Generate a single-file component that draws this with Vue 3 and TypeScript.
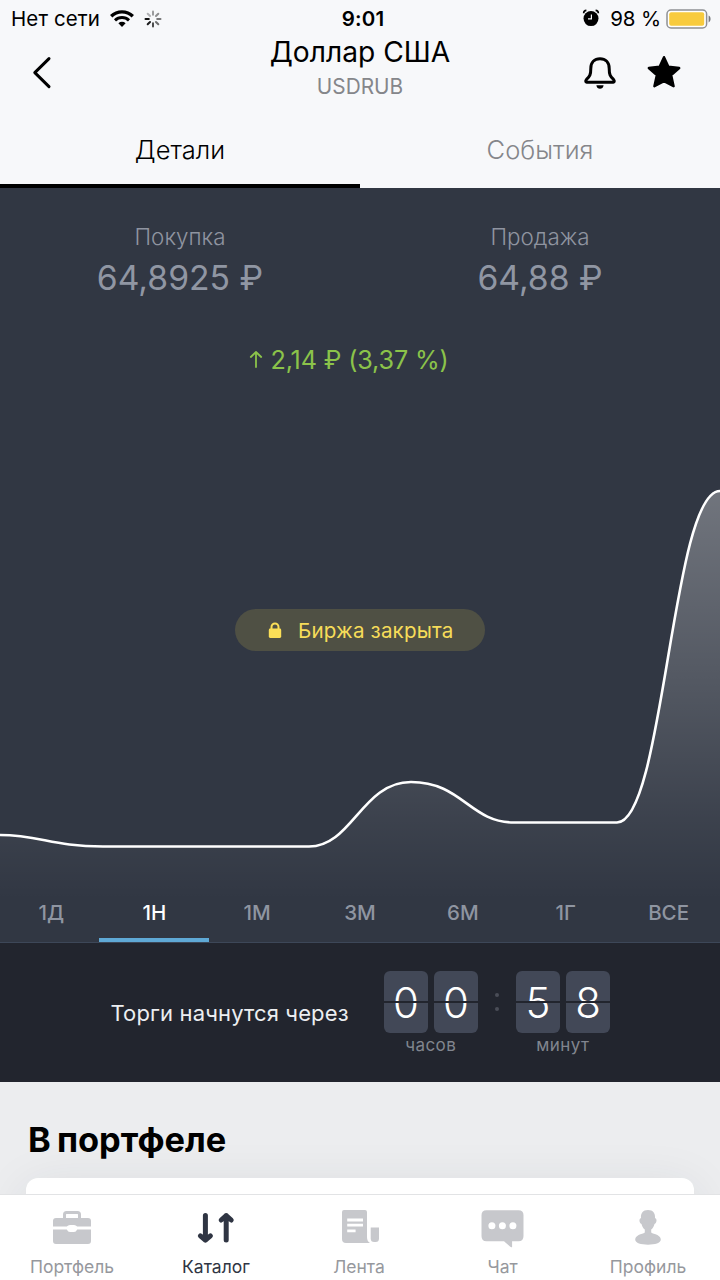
<script setup lang="ts">
import { ref } from 'vue'

const ranges: string[] = ['1Д', '1Н', '1М', '3М', '6М', '1Г', 'ВСЕ']
const activeRange = ref('1Н')

const tabs: string[] = ['Детали', 'События']
const activeTab = ref('Детали')

interface TimerGroup {
  digits: string[]
  label: string
}
const timer: TimerGroup[] = [
  { digits: ['0', '0'], label: 'часов' },
  { digits: ['5', '8'], label: 'минут' },
]

const spokes: { angle: number; opacity: number }[] = [
  { angle: 0, opacity: 0.4 },
  { angle: 45, opacity: 0.45 },
  { angle: 90, opacity: 0.55 },
  { angle: 135, opacity: 0.6 },
  { angle: 180, opacity: 0.75 },
  { angle: 225, opacity: 0.95 },
  { angle: 270, opacity: 1 },
  { angle: 315, opacity: 0.3 },
]

const linePath =
  'M0 647 C40 647 52 658.5 103 658.5 L309 658.5 C352 658.5 362 594 411 594 C462 594 470 634.5 514 634.5 L617 634.5 C664 634.5 672 303 720 303'
const areaPath = linePath + ' L720 755 L0 755 Z'
</script>

<template>
  <div class="screen">
    <header class="header">
      <div class="status">
        <div class="status-left">
          <span class="carrier">Нет сети</span>
          <svg class="wifi" width="26" height="20" viewBox="0 0 26 20" fill="none" stroke="#000">
            <path d="M2.2 7.2A15.6 15.6 0 0 1 23.8 7.2" stroke-width="3.4" />
            <path d="M6 11.4A10.2 10.2 0 0 1 20 11.4" stroke-width="3" />
            <path d="M13 18L9.4 14.3A5.2 5.2 0 0 1 16.6 14.3Z" fill="#000" stroke="none" />
          </svg>
          <svg class="spinner" width="18" height="18" viewBox="-9 -9 18 18" stroke="#111" stroke-width="2" stroke-linecap="round">
            <line
              v-for="s in spokes"
              :key="s.angle"
              x1="0"
              y1="-4.2"
              x2="0"
              y2="-7.5"
              :transform="`rotate(${s.angle})`"
              :opacity="s.opacity"
            />
          </svg>
        </div>
        <span class="clock">9:01</span>
        <div class="status-right">
          <svg class="alarm" width="18" height="18" viewBox="0 0 18 18">
            <circle cx="9" cy="9.6" r="7.5" />
            <path d="M1.6 4.2A3 3 0 0 1 4.4 1.4M16.4 4.2A3 3 0 0 0 13.6 1.4" fill="none" stroke="#000" stroke-width="1.6" />
            <path d="M9.4 5.4V9.8H6" fill="none" stroke="#f7f8fa" stroke-width="1.2" />
          </svg>
          <span class="percent">98 %</span>
          <svg class="battery" width="46" height="20" viewBox="0 0 46 20">
            <rect x="1" y="1" width="39.6" height="18" rx="4" fill="#fff" stroke="#8f9094" stroke-width="1.5" />
            <rect x="3.2" y="3.2" width="35" height="13.6" rx="2" fill="#f8cb3e" />
            <path d="M42.6 6.6C45.2 7.6 45.2 12.4 42.6 13.4Z" fill="#77787c" />
          </svg>
        </div>
      </div>
      <div class="nav">
        <svg class="back" width="20" height="34" viewBox="0 0 20 34" fill="none" stroke="#000" stroke-width="3" stroke-linecap="round" stroke-linejoin="round">
          <path d="M17 2.6L2.8 16.6L17 30.6" />
        </svg>
        <div class="titles">
          <h1 class="title">Доллар США</h1>
          <span class="ticker">USDRUB</span>
        </div>
        <div class="actions">
          <svg width="34" height="36" viewBox="0 -1 34 36">
            <path
              d="M17 2.7C11.5 2.7 7.8 6.5 7.8 12.4C7.8 18.8 6.8 20.4 3.5 23.4C2.4 24.6 2.5 26.2 3.6 26.2H30.4C31.5 26.2 31.6 24.6 30.5 23.4C27.2 20.4 26.2 18.8 26.2 12.4C26.2 6.5 22.5 2.7 17 2.7Z"
              fill="none"
              stroke="#000"
              stroke-width="3"
              stroke-linejoin="round"
            />
            <path d="M13.4 29.2H20.6C20.3 34 13.7 34 13.4 29.2Z" />
          </svg>
          <svg width="36" height="34" viewBox="0 0 36 34" stroke="#000" stroke-width="2.4" stroke-linejoin="round">
            <path d="M18 2.2L22.4 11.8L33.2 13L25.2 20.2L27.6 31.2L18 26.2L8.4 31.2L10.8 20.2L2.8 13L13.6 11.8Z" />
          </svg>
        </div>
      </div>
      <nav class="tabs">
        <button
          v-for="tab in tabs"
          :key="tab"
          class="tab"
          :class="{ active: tab === activeTab }"
          @click="activeTab = tab"
        >
          {{ tab }}
        </button>
      </nav>
    </header>

    <section class="chart-panel">
      <svg class="chart" width="720" height="755" viewBox="0 0 720 755">
        <defs>
          <linearGradient id="area" gradientUnits="userSpaceOnUse" x1="0" y1="303" x2="0" y2="712">
            <stop offset="0" stop-color="#fff" stop-opacity="0.31" />
            <stop offset="0.5" stop-color="#fff" stop-opacity="0.155" />
            <stop offset="0.8" stop-color="#fff" stop-opacity="0.055" />
            <stop offset="1" stop-color="#fff" stop-opacity="0" />
          </linearGradient>
        </defs>
        <path :d="areaPath" fill="url(#area)" />
        <path :d="linePath" fill="none" stroke="#fff" stroke-width="2.6" />
      </svg>
      <div class="panel-content">
        <div class="quotes">
          <div class="quote">
            <span class="quote-label">Покупка</span>
            <span class="quote-price">64,8925 ₽</span>
          </div>
          <div class="quote">
            <span class="quote-label">Продажа</span>
            <span class="quote-price">64,88 ₽</span>
          </div>
        </div>
        <div class="change">
          <svg width="14" height="20" viewBox="0 0 14 20" fill="none" stroke="#8bc34a" stroke-width="1.8" stroke-linecap="round" stroke-linejoin="round">
            <path d="M7 17V2M1.8 7L7 2L12.2 7" />
          </svg>
          <span>2,14 ₽ (3,37 %)</span>
        </div>
        <div class="closed">
          <svg width="14" height="17" viewBox="0 0 14 17">
            <rect x="0.8" y="6.6" width="12.4" height="9.4" rx="1.4" fill="#fbdf57" />
            <path d="M3.5 8V5A3.5 3.5 0 0 1 10.5 5V8" fill="none" stroke="#fbdf57" stroke-width="2" />
          </svg>
          <span>Биржа закрыта</span>
        </div>
        <div class="ranges">
          <button
            v-for="r in ranges"
            :key="r"
            class="range"
            :class="{ active: r === activeRange }"
            @click="activeRange = r"
          >
            {{ r }}
          </button>
        </div>
      </div>
    </section>

    <section class="countdown">
      <span class="countdown-text">Торги начнутся через</span>
      <div class="timer">
        <template v-for="(group, i) in timer" :key="group.label">
          <div v-if="i > 0" class="colon"><i></i><i></i></div>
          <div class="group">
            <div class="digits">
              <span v-for="(d, j) in group.digits" :key="j" class="digit">{{ d }}</span>
            </div>
            <span class="unit">{{ group.label }}</span>
          </div>
        </template>
      </div>
    </section>

    <section class="portfolio">
      <h2 class="portfolio-title">В портфеле</h2>
      <div class="card"></div>
    </section>

    <footer class="tabbar">
      <div class="item">
        <svg width="44" height="46" viewBox="0 0 44 46" fill="#c7c8cc">
          <path d="M14.5 14V8.5Q14.5 6.5 16.5 6.5H27.5Q29.5 6.5 29.5 8.5V14" fill="none" stroke="#c7c8cc" stroke-width="3" />
          <path d="M6 12H38Q41 12 41 15V20.6H27.2Q26 19 24 19H20Q18 19 16.8 20.6H3V15Q3 12 6 12Z" />
          <path d="M3 23.4H16.8Q18 26 20 26H24Q26 26 27.2 23.4H41V35Q41 38 38 38H6Q3 38 3 35Z" />
        </svg>
        <span>Портфель</span>
      </div>
      <div class="item current">
        <svg width="44" height="46" viewBox="0 0 44 46" fill="none" stroke="#2f3543" stroke-width="5" stroke-linecap="round" stroke-linejoin="round">
          <path d="M11.4 9.5V34M6.4 29.8L11.4 34.2L16.4 29.8" />
          <path d="M32.2 34V9.6M27.2 14L32.2 9.5L37.2 14" />
        </svg>
        <span>Каталог</span>
      </div>
      <div class="item news">
        <svg width="44" height="46" viewBox="0 0 44 46" fill="#c7c8cc">
          <path d="M7 4H28Q30 4 30 6V31Q30 35.5 33 37H9Q5 37 5 33V6Q5 4 7 4Z" />
          <path d="M33.7 21.5H42V32.5Q42 36 38.5 36H37.2Q33.7 36 33.7 32.5Z" />
          <path d="M10.2 14H26M10.2 19.2H26M10.2 24.8H18.6" stroke="#fff" stroke-width="2.8" />
        </svg>
        <span>Лента</span>
      </div>
      <div class="item chat">
        <svg width="44" height="46" viewBox="0 0 44 46" fill="#c7c8cc">
          <path d="M6 4.2H38Q43 4.2 43 9.2V30Q43 35.3 38 35.3H31.6V40.9Q30.8 41.6 29.5 40.6L23.5 35.3H6Q1 35.3 1 30V9.2Q1 4.2 6 4.2Z" />
          <g fill="#fff">
            <circle cx="11.4" cy="19.8" r="3.5" />
            <circle cx="21.9" cy="19.8" r="3.5" />
            <circle cx="32.4" cy="19.8" r="3.5" />
          </g>
        </svg>
        <span>Чат</span>
      </div>
      <div class="item">
        <svg width="44" height="46" viewBox="0 0 44 46" fill="#c7c8cc">
          <path d="M22 4C16.8 4 14.6 7.5 15 12C12.8 12.6 13 17 15.5 18C16.3 21 17.5 22.5 18.8 23.6V26.4C17.5 27.8 15 27.6 12.6 29C10 30.5 9.2 32 9.2 33.6C9.2 37 15 38.8 22 38.8C29 38.8 34.8 37 34.8 33.6C34.8 32 34 30.5 31.4 29C29 27.6 26.5 27.8 25.2 26.4V23.6C26.5 22.5 27.7 21 28.5 18C31 17 31.2 12.6 29 12C29.4 7.5 27.2 4 22 4Z" />
        </svg>
        <span>Профиль</span>
      </div>
    </footer>
  </div>
</template>

<style>
body {
  margin: 0;
  overflow: hidden;
}
</style>

<style scoped>
.screen {
  width: 720px;
  height: 1280px;
  display: flex;
  flex-direction: column;
  overflow: hidden;
  font-family: Inter, 'Noto Sans', sans-serif;
  color: #000;
  white-space: nowrap;
}
button {
  border: 0;
  padding: 0;
  background: none;
  font: inherit;
  color: inherit;
}
.header {
  height: 188px;
  flex: none;
  background: #f7f8fa;
  display: flex;
  flex-direction: column;
}
.status {
  height: 37px;
  display: grid;
  grid-template-columns: 1fr auto 1fr;
  align-items: center;
  font-size: 20.5px;
}
.status-left {
  display: flex;
  align-items: center;
  padding-left: 11px;
}
.carrier {
  width: 98px;
  letter-spacing: 0.1px;
}
.spinner {
  margin-left: 9px;
}
.clock {
  font-weight: 600;
  padding-left: 6px;
  letter-spacing: 0.2px;
}
.status-right {
  display: flex;
  align-items: center;
  justify-content: flex-end;
  padding-right: 8px;
}
.alarm {
  margin-top: -1px;
}
.percent {
  margin: 0 5px 0 10px;
  letter-spacing: -0.15px;
}
.nav {
  height: 75px;
  display: grid;
  grid-template-columns: 1fr auto 1fr;
}
.back {
  margin: 19px 0 0 32px;
}
.titles {
  display: flex;
  flex-direction: column;
  align-items: center;
}
.title {
  margin: 0;
  height: 30px;
  line-height: 30px;
  font-size: 28.2px;
  font-weight: 400;
}
.ticker {
  height: 39px;
  line-height: 39px;
  font-size: 20.8px;
  color: #85868a;
}
.actions {
  display: flex;
  justify-content: flex-end;
  gap: 29px;
  padding: 18px 38px 0 0;
}
.tabs {
  flex: 1;
  display: flex;
}
.tab {
  flex: 1;
  box-sizing: border-box;
  border-bottom: 4px solid transparent;
  padding-top: 2px;
  font-size: 25.5px;
  font-weight: 300;
  color: #85868a;
}
.tab.active {
  border-bottom-color: #000;
  color: #000;
}
.chart-panel {
  position: relative;
  height: 755px;
  flex: none;
  background: #313743;
}
.chart {
  position: absolute;
  left: 0;
  top: 0;
}
.panel-content {
  position: relative;
  height: 100%;
  display: flex;
  flex-direction: column;
  align-items: center;
}
.quotes {
  width: 100%;
  display: flex;
  padding-top: 33px;
}
.quote {
  flex: 1;
  display: flex;
  flex-direction: column;
  align-items: center;
}
.quote-label {
  height: 32px;
  line-height: 32px;
  font-size: 22.4px;
  font-weight: 300;
  color: #8f94a0;
}
.quote-price {
  height: 50px;
  line-height: 50px;
  font-size: 33.7px;
  color: #9096a3;
}
.change {
  display: flex;
  align-items: center;
  gap: 7px;
  height: 40px;
  margin: 37px 22px 0 0;
  line-height: 40px;
  font-size: 25.2px;
  letter-spacing: -0.15px;
  color: #8bc34a;
}
.closed {
  width: 250px;
  height: 42px;
  margin-top: 229px;
  border-radius: 21px;
  box-sizing: border-box;
  display: flex;
  align-items: center;
  padding-left: 33px;
  gap: 16px;
  background: #4f5044;
  color: #f6dc59;
  font-size: 20.6px;
  letter-spacing: 0.15px;
}
.ranges {
  width: 100%;
  height: 61px;
  margin-top: auto;
  box-sizing: border-box;
  border-bottom: 1px solid #3d4758;
  display: flex;
}
.range {
  flex: 1 1 0;
  padding-top: 1px;
  font-size: 20.5px;
  font-weight: 500;
  color: #8f95a1;
  display: flex;
  justify-content: center;
  align-items: center;
  position: relative;
}
.range.active {
  color: #fff;
}
.range.active::after {
  content: '';
  position: absolute;
  left: -4px;
  right: -3px;
  bottom: 0;
  height: 4px;
  background: #5fa9d6;
}
.countdown {
  height: 139px;
  flex: none;
  background: #22252e;
  display: flex;
  align-items: flex-start;
}
.countdown-text {
  width: 273.5px;
  padding-left: 110.5px;
  margin-top: 54px;
  line-height: 32px;
  font-size: 22px;
  letter-spacing: 0.13px;
  color: #eceef1;
}
.timer {
  display: flex;
  margin-top: 28px;
}
.group {
  display: flex;
  flex-direction: column;
  align-items: center;
}
.digits {
  display: flex;
  gap: 6.5px;
}
.digit {
  position: relative;
  box-sizing: border-box;
  width: 43.5px;
  height: 62px;
  padding-right: 1px;
  line-height: 63px;
  border-radius: 6px;
  background: #424857;
  color: #fff;
  text-align: center;
  font-size: 42px;
  font-weight: 350;
  letter-spacing: -1.5px;
}
.digit::after {
  content: '';
  position: absolute;
  left: 0;
  right: 0;
  top: 30px;
  height: 2px;
  background: #22252e;
}
.unit {
  height: 24px;
  line-height: 24px;
  font-size: 17px;
  letter-spacing: 0.4px;
  color: #81858f;
}
.colon {
  width: 38.5px;
  height: 62px;
  display: flex;
  flex-direction: column;
  align-items: center;
  justify-content: center;
  gap: 10px;
}
.colon i {
  width: 4px;
  height: 4px;
  border-radius: 50%;
  background: #4a4d57;
}
.portfolio {
  height: 112px;
  flex: none;
  overflow: hidden;
  background: #ecedef;
}
.portfolio-title {
  margin: 0;
  padding: 38px 0 0 28px;
  height: 57.5px;
  line-height: 40px;
  font-size: 34.4px;
  font-weight: 700;
  word-spacing: -2px;
  position: relative;
}
.card {
  width: 668px;
  height: 80px;
  margin-left: 26px;
  border-radius: 12px;
  background: #fff;
  box-shadow: 0 10px 50px rgba(40, 45, 55, 0.1);
}
.tabbar {
  flex: 1;
  box-sizing: border-box;
  border-top: 1px solid #e2e3e5;
  background: #fff;
  display: flex;
  position: relative;
}
.item {
  flex: 1;
  display: flex;
  flex-direction: column;
  align-items: center;
  padding-top: 11px;
  font-size: 17.5px;
  color: #96989d;
}
.item svg {
  flex: none;
}
.item span {
  height: 30px;
  line-height: 30px;
}
.item.news {
  transform: translateX(-1px);
}
.item.chat {
  transform: translateX(-1.5px);
}
.item.current {
  color: #2f3543;
}
</style>
